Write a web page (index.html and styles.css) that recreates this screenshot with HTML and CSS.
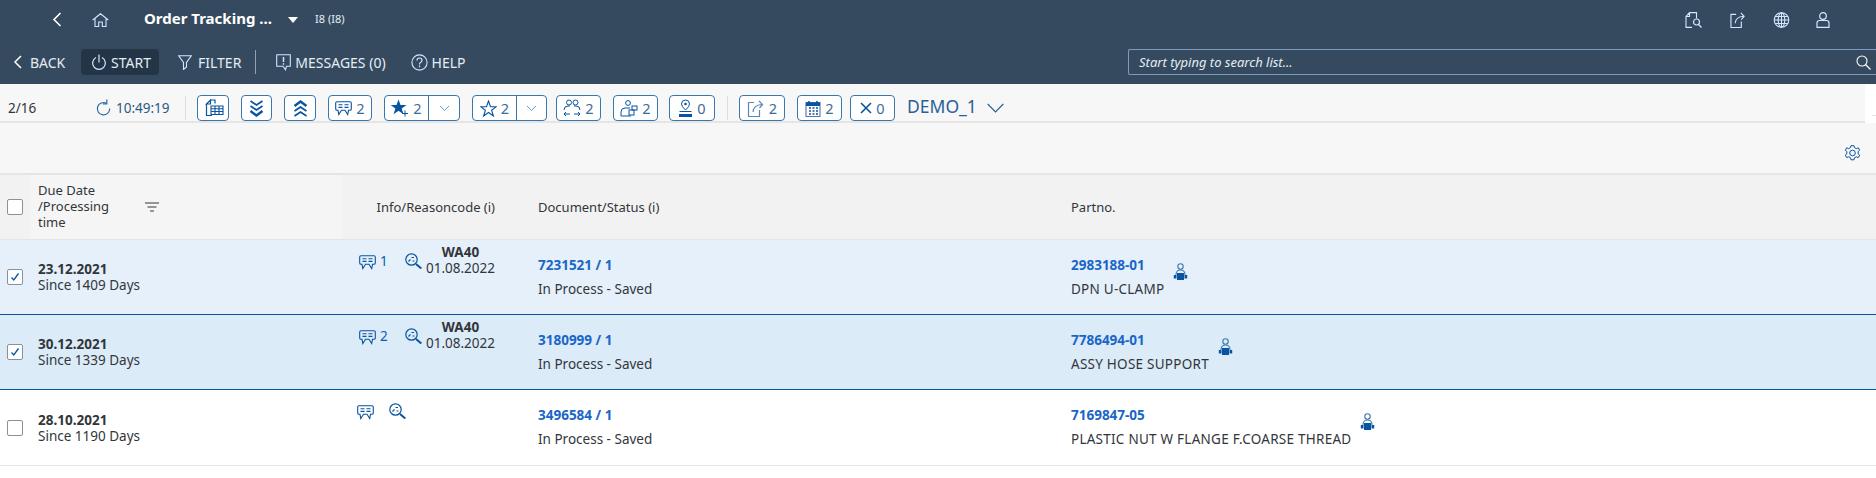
FILE: index.html
```html
<!DOCTYPE html>
<html lang="en">
<head>
    <meta charset="UTF-8">
    <meta name="viewport" content="width=device-width, initial-scale=1.0">
    <title>Order Tracking</title>
    <link rel="stylesheet" href="styles.css">
</head>
<body>

    <svg class="icon-defs" xmlns="http://www.w3.org/2000/svg">
        <symbol id="i-chat" viewBox="0 0 17 15"><path d="M2 .7h13q1.300 0 1.300 1.300v6q0 1.300-1.300 1.300h-1.500l-.8 4.200-2.700-4.200H6.500l-2.700 4.200-.8-4.200H2Q.7 9.300.7 8V2Q.7.7 2 .7z" fill="none" stroke="currentColor" stroke-width="1.100"/><path d="M3.500 3.800h4M9.500 3.800h4M3.500 6.400h4M9.500 6.400h4" stroke="currentColor" stroke-width="1.100"/></symbol>
        <symbol id="i-zoom" viewBox="0 0 17 16"><circle cx="6.500" cy="6.500" r="5.700" fill="none" stroke="currentColor" stroke-width="1.200"/><path d="M11 11l5.300 4.500" stroke="currentColor" stroke-width="2"/><path d="M3.500 8.500l2-2.200M6.500 4.500h2.500M7.500 8h2" stroke="currentColor" stroke-width="1.200"/></symbol>
        <symbol id="i-person" viewBox="0 0 15 18"><circle cx="7.500" cy="3.500" r="2.700" fill="none" stroke="#3a77ad" stroke-width="1.100"/><path d="M3 12q0-5 4.500-5T12 12" fill="none" stroke="#3a77ad" stroke-width="1.100"/><rect x="4" y="10" width="7" height="7" fill="#0854a0"/><path d="M.8 12h2.700v3.500H.8zM11.500 12h2.700v3.500h-2.700z" fill="#0854a0"/></symbol>
        <symbol id="i-share" viewBox="0 0 18 17"><path d="M7 2.500H1.500v14h11V10" fill="none" stroke="currentColor" stroke-width="1.200"/><path d="M6 12q.5-7 9-7.500M12 1l3.500 3.500-3 3.500" fill="none" stroke="currentColor" stroke-width="1.200"/></symbol>
    </svg>

    <header class="shell">
        <div class="shell-top">
            <svg class="nav-back" width="10" height="15" viewBox="0 0 10 15"><path d="M8.500 1L2 7.500 8.500 14" fill="none" stroke="#fff" stroke-width="1.600"/></svg>
            <svg class="nav-home" width="17" height="14" viewBox="0 0 17 14"><path d="M.7 7L8.500.7 16.300 7M3 5.500v8h3.700V9h3.600v4.500H14v-8" fill="none" stroke="#d1e8ff" stroke-width="1.100"/></svg>
            <span class="app-title">Order Tracking ...</span>
            <span class="app-caret"></span>
            <span class="app-system">I8 (I8)</span>
            <div class="shell-icons">
                <svg width="18" height="16" viewBox="0 0 18 16"><path d="M7 .6h4.500v6M7 15.400H1V4.500L4.500.6H7M1 4.500h3.500V.6" fill="none" stroke="#d1e8ff" stroke-width="1.100"/><circle cx="11.500" cy="10" r="3" fill="none" stroke="#d1e8ff" stroke-width="1.200"/><path d="M13.500 12.500l3 3" stroke="#d1e8ff" stroke-width="1.300"/></svg>
                <svg class="ico-light" width="18" height="16"><use href="#i-share"/></svg>
                <svg width="17" height="16" viewBox="0 0 17 16"><g fill="none" stroke="#d1e8ff" stroke-width="1.100"><circle cx="8.500" cy="8" r="7.300"/><ellipse cx="8.500" cy="8" rx="3.300" ry="7.300"/><path d="M8.500.7v14.600M1.200 8h14.600M2 4.500h13M2 11.500h13"/></g></svg>
                <svg width="14" height="16" viewBox="0 0 14 16"><g fill="none" stroke="#d1e8ff" stroke-width="1.200"><circle cx="7" cy="4" r="3.300"/><path d="M1 15.400V11q0-2.500 2.500-2.500h7Q13 8.500 13 11v4.400z"/></g></svg>
            </div>
        </div>
        <div class="shell-actions">
            <a class="act act-back"><svg width="9" height="14" viewBox="0 0 9 14"><path d="M8 1L2 7l6 6" fill="none" stroke="#fff" stroke-width="1.500"/></svg>BACK</a>
            <a class="act act-start"><svg width="14" height="16" viewBox="0 0 14 16"><path d="M4 3.500a6.300 6.300 0 1 0 6 0M7 .5v8" fill="none" stroke="#d1e8ff" stroke-width="1.200"/></svg>START</a>
            <a class="act act-filter"><svg width="14" height="15" viewBox="0 0 14 15"><path d="M.7.7h12.600L8.500 7.500v4.500l-3 2.500V7.500z" fill="none" stroke="#d1e8ff" stroke-width="1.100"/></svg>FILTER</a>
            <span class="act-divider"></span>
            <a class="act act-msg"><svg width="17" height="17" viewBox="0 0 17 17"><path d="M2 .7h13.300v11.600H11.500l-1 3.500-2.500-3.500H1.700V1z" fill="none" stroke="#d1e8ff" stroke-width="1.100"/><path d="M8.500 3v5M8.500 9.300v1.500" stroke="#d1e8ff" stroke-width="1.500"/></svg>MESSAGES (0)</a>
            <a class="act act-help"><svg width="17" height="17" viewBox="0 0 17 17"><circle cx="8.500" cy="8.500" r="7.600" fill="none" stroke="#d1e8ff" stroke-width="1.100"/><path d="M6 6.500q0-2.500 2.500-2.500T11 6.300q0 1.400-1.500 2.200-1 .6-1 2M8.500 11.500v1.700" fill="none" stroke="#d1e8ff" stroke-width="1.200"/></svg>HELP</a>
            <div class="search">
                <span>Start typing to search list...</span>
                <svg width="15" height="15" viewBox="0 0 15 15"><circle cx="6" cy="6" r="5" fill="none" stroke="#fff" stroke-width="1.100"/><path d="M9.500 9.500l5 5" stroke="#fff" stroke-width="1.300"/></svg>
            </div>
        </div>
    </header>

    <section class="toolbar">
        <span class="counter">2/16</span>
        <svg class="refresh" width="15" height="17" viewBox="0 0 15 17"><path d="M10.500 4.300A6.200 6.200 0 1 0 13.700 9.500" fill="none" stroke="#2b6aa6" stroke-width="1.200"/><path d="M10.800 .5v4.300H6.800" fill="none" stroke="#2b6aa6" stroke-width="1.200"/></svg>
        <span class="clock">10:49:19</span>
        <span class="tb-sep"></span>

        <button class="tbtn w-square"><svg width="22" height="18" viewBox="0 0 22 18"><path d="M8.500 1H13v3.500M4.500 5v11.500H10M4.500 5l4-4v4z" fill="none" stroke="#0854a0" stroke-width="1.200"/><path d="M9 7h12v8.500H9z" fill="#fff" stroke="#0854a0" stroke-width="1.100"/><path d="M9 9.700h12M9 12.500h12M13 7v8.500M17 7v8.500" stroke="#0854a0" stroke-width="1.100"/></svg></button>
        <button class="tbtn w-square narrow"><svg width="15" height="17" viewBox="0 0 15 17"><path d="M1.500 1l6 4 6-4M1.500 6l6 4 6-4" fill="none" stroke="#0854a0" stroke-width="1.700"/><path d="M1.500 11l6 4.500 6-4.500" fill="none" stroke="#0854a0" stroke-width="2.400"/></svg></button>
        <button class="tbtn w-square"><svg width="15" height="17" viewBox="0 0 15 17"><path d="M1.500 6L7.500 1.500l6 4.500" fill="none" stroke="#0854a0" stroke-width="2.400"/><path d="M1.500 11l6-4 6 4M1.500 16l6-4 6 4" fill="none" stroke="#0854a0" stroke-width="1.700"/></svg></button>
        <button class="tbtn w-chat"><svg class="ico-blue" width="17" height="15"><use href="#i-chat"/></svg>2</button>
        <div class="tsplit">
            <button class="tbtn-main"><svg width="18" height="18" viewBox="0 0 18 18"><path d="M7.500.5l2 5.500h6l-4.800 3.600 1.800 5.600-5-3.400-5 3.400 1.900-5.600L-.2 6h5.700z" fill="#0854a0"/><path d="M14 11.500v6M11 14.500h6" stroke="#0854a0" stroke-width="1"/></svg>2</button>
            <button class="tbtn-more"><svg width="11" height="7" viewBox="0 0 11 7"><path d="M1 1l4.500 4.500L10 1" fill="none" stroke="#6a9bc3" stroke-width="1"/></svg></button>
        </div>
        <div class="tsplit second">
            <button class="tbtn-main"><svg width="17" height="17" viewBox="0 0 17 17"><path d="M8.500 1l2 5.700h5.800l-4.700 3.500 1.800 5.800-4.900-3.500L3.600 16l1.800-5.800L.7 6.700h5.800z" fill="none" stroke="#0854a0" stroke-width="1.100"/></svg>2</button>
            <button class="tbtn-more"><svg width="11" height="7" viewBox="0 0 11 7"><path d="M1 1l4.500 4.500L10 1" fill="none" stroke="#6a9bc3" stroke-width="1"/></svg></button>
        </div>
        <button class="tbtn w-count"><svg width="18" height="18" viewBox="0 0 18 18"><g fill="none" stroke="#0854a0" stroke-width="1"><circle cx="6" cy="3.500" r="2.500"/><circle cx="12.500" cy="3.500" r="2.500"/><path d="M1 11q0-4 4-4h2M11 7h2q4 0 4 4"/><path d="M1 15h6M3 13l-2 2 2 2M11 15h6M15 13l2 2-2 2"/></g></svg>2</button>
        <button class="tbtn w-count tight"><svg width="18" height="17" viewBox="0 0 18 17"><g fill="none" stroke="#0854a0" stroke-width="1"><circle cx="8" cy="3" r="2.400"/><path d="M1 16v-4q0-4 4-4h5"/><path d="M1 16h10"/><rect x="12" y="6" width="5" height="4"/><rect x="9" y="10" width="5" height="5"/></g></svg>2</button>
        <button class="tbtn w-count wide"><svg width="15" height="18" viewBox="0 0 15 18"><path d="M7.500 1a4 4 0 0 0-4 4q0 2.500 4 6 4-3.500 4-6a4 4 0 0 0-4-4z" fill="none" stroke="#0854a0" stroke-width="1"/><circle cx="7.500" cy="5" r="1.300" fill="#0854a0"/><path d="M1.500 12.500h12" stroke="#0854a0" stroke-width="1"/><rect x="1" y="15" width="13" height="3" fill="#0854a0"/></svg>0</button>
        <span class="tb-sep group"></span>
        <button class="tbtn w-count wide"><svg class="ico-soft" width="18" height="17"><use href="#i-share"/></svg>2</button>
        <button class="tbtn w-count cal"><svg width="16" height="17" viewBox="0 0 16 17"><path d="M1 2.500h14v14H1z" fill="none" stroke="#5b6fa8" stroke-width="1.100"/><path d="M1 2.500h14V6H1z" fill="#0854a0"/><path d="M4 1v3M12 1v3" stroke="#0854a0" stroke-width="1.500"/><path d="M4 8h2M7.500 8h2M11 8h2M4 11h2M7.500 11h2M11 11h2M4 14h2M7.500 14h2M11 14h2" stroke="#0854a0" stroke-width="1.400"/></svg>2</button>
        <button class="tbtn w-count"><svg width="12" height="12" viewBox="0 0 12 12"><path d="M1 1l10 10M11 1L1 11" stroke="#0854a0" stroke-width="1.600"/></svg>0</button>
        <span class="variant">DEMO_1</span>
        <svg class="variant-arrow" width="17" height="10" viewBox="0 0 17 10"><path d="M.7 1l7.800 7.800L16.300 1" fill="none" stroke="#2a6096" stroke-width="1.200"/></svg>
    </section>
    <span class="stub-line"></span>

    <section class="settings-bar">
        <svg width="17" height="16" viewBox="0 0 17 16"><g fill="none" stroke="#0854a0" stroke-width="1"><circle cx="8.500" cy="8" r="2.800"/><path d="M7 .7h3l.5 2 1.900.9 1.900-.8 1.400 2.400-1.500 1.300v2.400l1.500 1.200-1.400 2.500-1.900-.8-1.900.9-.5 2.100H7l-.5-2.100-1.900-.9-1.900.8-1.400-2.500 1.500-1.200V6.500L1.300 5.200l1.400-2.400 1.900.8 1.900-.9z"/></g></svg>
    </section>

    <section class="table">
        <div class="row row-head">
            <div class="cell cell-check"><span class="check"></span></div>
            <div class="cell head-due">
                <span class="head-due-text">Due Date /Processing time</span>
                <svg width="14" height="10" viewBox="0 0 14 10"><path d="M0 1h14M2.500 5h9M5 9h4" stroke="#32363a" stroke-width="1.200"/></svg>
            </div>
            <div class="cell head-info">Info/Reasoncode (i)</div>
            <div class="cell head-plain">Document/Status (i)</div>
            <div class="cell head-plain">Partno.</div>
        </div>

        <div class="row row-sel">
            <div class="cell cell-check"><span class="check checked"><svg width="10" height="10" viewBox="0 0 10 10"><path d="M1.500 5.500l2.300 2.500L8.500 1.500" fill="none" stroke="#0854a0" stroke-width="1.300"/></svg></span></div>
            <div class="cell cell-stack"><b>23.12.2021</b><span>Since 1409 Days</span></div>
            <div class="cell cell-info">
                <svg class="ico-chat" width="17" height="15"><use href="#i-chat"/></svg><span class="info-count">1</span>
                <svg class="ico-zoom" width="17" height="16"><use href="#i-zoom"/></svg>
                <div class="reason"><b>WA40</b><span>01.08.2022</span></div>
            </div>
            <div class="cell cell-two"><a>7231521 / 1</a><span>In Process - Saved</span></div>
            <div class="cell cell-part">
                <div class="cell-two"><a>2983188-01</a><span class="part-desc">DPN U-CLAMP</span></div>
                <svg class="ico-person" width="15" height="18"><use href="#i-person"/></svg>
            </div>
        </div>

        <div class="row row-sel2">
            <div class="cell cell-check"><span class="check checked"><svg width="10" height="10" viewBox="0 0 10 10"><path d="M1.500 5.500l2.300 2.500L8.500 1.500" fill="none" stroke="#0854a0" stroke-width="1.300"/></svg></span></div>
            <div class="cell cell-stack"><b>30.12.2021</b><span>Since 1339 Days</span></div>
            <div class="cell cell-info">
                <svg class="ico-chat" width="17" height="15"><use href="#i-chat"/></svg><span class="info-count">2</span>
                <svg class="ico-zoom" width="17" height="16"><use href="#i-zoom"/></svg>
                <div class="reason"><b>WA40</b><span>01.08.2022</span></div>
            </div>
            <div class="cell cell-two"><a>3180999 / 1</a><span>In Process - Saved</span></div>
            <div class="cell cell-part">
                <div class="cell-two"><a>7786494-01</a><span class="part-desc">ASSY HOSE SUPPORT</span></div>
                <svg class="ico-person" width="15" height="18"><use href="#i-person"/></svg>
            </div>
        </div>

        <div class="row row-plain">
            <div class="cell cell-check"><span class="check"></span></div>
            <div class="cell cell-stack"><b>28.10.2021</b><span>Since 1190 Days</span></div>
            <div class="cell cell-info empty">
                <svg class="ico-chat" width="17" height="15"><use href="#i-chat"/></svg>
                <svg class="ico-zoom" width="17" height="16"><use href="#i-zoom"/></svg>
            </div>
            <div class="cell cell-two"><a>3496584 / 1</a><span>In Process - Saved</span></div>
            <div class="cell cell-part">
                <div class="cell-two"><a>7169847-05</a><span class="part-desc">PLASTIC NUT W FLANGE F.COARSE THREAD</span></div>
                <svg class="ico-person" width="15" height="18"><use href="#i-person"/></svg>
            </div>
        </div>
    </section>

</body>
</html>
```

FILE: styles.css
```css
* {
    box-sizing: border-box;
}
html, body {
    height: 100%;
}
body {
    margin: 0;
    overflow: hidden;
    background-color: #fff;
    color: #32363a;
    font-family: "Noto Sans", "Liberation Sans", Arial, sans-serif;
    font-size: 13.5px;
    position: relative;
}
a {
    color: inherit;
}
svg {
    display: block;
    flex: none;
}
.icon-defs {
    display: none;
}

/* dark header */
.shell {
    height: 84px;
    background-color: #354a5f;
    color: #fff;
}
.shell-top {
    height: 36px;
    padding: 3px 46px 0 52px;
    display: flex;
    align-items: center;
}
.nav-home {
    margin-left: 30px;
}
.app-title {
    margin: 0 0 3px 35px;
    font-size: 15px;
    font-weight: bold;
    width: 144px;
    white-space: nowrap;
}
.app-caret {
    width: 0;
    height: 0;
    border-left: 5px solid transparent;
    border-right: 5px solid transparent;
    border-top: 6px solid #fff;
}
.app-system {
    margin: 0 0 2px 17px;
    font-size: 11px;
    color: #e4edf5;
}
.shell-icons {
    margin-left: auto;
    display: flex;
    align-items: center;
    gap: 26px;
    color: #d1e8ff;
}
.shell-actions {
    height: 48px;
    padding: 13px 0 9px 13px;
    display: flex;
    align-items: center;
    font-size: 14px;
    color: #e4edf5;
}
.act {
    height: 26px;
    display: flex;
    align-items: center;
    white-space: nowrap;
}
.act-back {
    gap: 8px;
    width: 68px;
}
.act-start {
    gap: 5px;
    width: 78px;
    padding-left: 11px;
    background-color: #233547;
    border-radius: 4px;
}
.act-filter {
    margin-left: 19px;
    gap: 6px;
}
.act-divider {
    width: 1px;
    height: 24px;
    margin: 0 19px 0 14px;
    background-color: #8fa3b5;
}
.act-msg {
    gap: 3px;
}
.act-help {
    margin-left: 25px;
    gap: 4px;
}
.search {
    margin-left: auto;
    width: 748px;
    height: 26px;
    padding: 0 5px 0 10px;
    border: 1px solid #7c9cbf;
    border-right: none;
    border-radius: 2px 0 0 2px;
    display: flex;
    align-items: center;
    justify-content: space-between;
    font-size: 13px;
    font-style: italic;
    color: #e4edf5;
}

/* button toolbar */
.toolbar {
    height: 39px;
    margin-right: 11px;
    padding: 11px 0 1px 8px;
    background-color: #f7f7f7;
    border-bottom: 2px solid #e5e5e5;
    display: flex;
    align-items: flex-start;
}
.counter {
    line-height: 26px;
    width: 88px;
}
.refresh {
    margin-top: 4px;
}
.clock {
    margin-left: 5px;
    line-height: 26px;
    color: #2b5a85;
    width: 54px;
}
.tb-sep {
    width: 1px;
    height: 24px;
    margin: 1px 11px 0 15px;
    background-color: #dcdcdc;
}
.tb-sep.group {
    margin: 1px 11px 0 0;
}
.tbtn, .tsplit {
    height: 26px;
    border: 1.5px solid #3a77ad;
    border-radius: 4px;
    background-color: #fff;
    color: #3b6d99;
    font-family: inherit;
    font-size: 14.5px;
}
.tbtn {
    margin-right: 12px;
    padding: 0;
    display: flex;
    align-items: center;
    justify-content: center;
    gap: 4px;
}
.w-square {
    width: 32px;
}
.w-square.narrow {
    width: 31px;
}
.w-chat {
    width: 44px;
}
.tsplit {
    width: 76px;
    margin-right: 12px;
    display: flex;
}
.tsplit.second {
    width: 75px;
    margin-right: 9px;
}
.tbtn-main, .tbtn-more {
    height: 100%;
    padding: 0;
    border: none;
    background: none;
    color: inherit;
    font: inherit;
    display: flex;
    align-items: center;
    justify-content: center;
    gap: 4px;
}
.tbtn-main {
    width: 44px;
    border-right: 1.5px solid #3a77ad;
}
.tbtn-more {
    flex: 1;
}
.w-count {
    width: 45px;
}
.w-count.wide {
    width: 46px;
}
.tbtn.tight {
    margin-right: 11px;
}
.tbtn.cal {
    margin-right: 8px;
}
.ico-soft {
    color: #5d88ad;
}
.ico-blue {
    color: #0854a0;
}
.ico-light {
    color: #d1e8ff;
}
.variant {
    font-size: 17.5px;
    line-height: 23px;
    color: #2a6096;
}
.variant-arrow {
    margin: 8px 0 0 10px;
}
.stub-line {
    position: absolute;
    top: 115px;
    right: 0;
    width: 4px;
    height: 1px;
    background-color: #e5e5e5;
}

/* bar with the settings wheel */
.settings-bar {
    height: 52px;
    padding: 22px 15px 0 0;
    background-color: #f7f7f7;
    border-bottom: 2px solid #e5e5e5;
    display: flex;
    justify-content: flex-end;
}

/* table */
.row {
    display: grid;
    grid-template-columns: 30px 312px 188px 533px 1fr;
    height: 75px;
    border-bottom: 1px solid #0854a0;
}
.row-head {
    height: 65px;
    font-size: 13px;
    background-color: #f2f2f2;
    border-bottom: 1px solid #e5e5e5;
}
.row-sel {
    background-color: #e5f0fa;
}
.row-sel2 {
    background-color: #dcebf8;
}
.row-plain {
    height: 76px;
    background-color: #fff;
    border-bottom: 1px solid #e5e5e5;
}
.cell {
    min-width: 0;
}
.cell-check {
    display: flex;
    align-items: center;
    padding-left: 7px;
}
.check {
    width: 16px;
    height: 16px;
    background-color: #fff;
    border: 1px solid #89919a;
    border-radius: 2px;
    display: flex;
    align-items: center;
    justify-content: center;
}
.head-due {
    background-color: #f5f5f5;
    padding-left: 8px;
    display: flex;
    align-items: center;
}
.head-due-text {
    width: 88px;
    line-height: 15.7px;
    margin-right: 19px;
}
.head-info {
    padding-right: 35px;
    display: flex;
    align-items: center;
    justify-content: flex-end;
    white-space: nowrap;
}
.head-plain {
    padding-left: 8px;
    display: flex;
    align-items: center;
}
.cell-stack {
    padding-left: 8px;
    display: flex;
    flex-direction: column;
    justify-content: center;
    line-height: 16px;
}
.cell-stack b, .reason b {
    font-weight: bold;
}
.cell-info {
    padding: 4px 35px 0 17px;
    display: flex;
    align-items: flex-start;
    color: #0854a0;
}
.cell-info.empty {
    padding-left: 15px;
    gap: 15px;
}
.ico-chat {
    margin-top: 11px;
}
.ico-zoom {
    margin-top: 9px;
    margin-left: 17px;
}
.empty .ico-zoom {
    margin-left: 0;
}
.info-count {
    margin: 9px 0 0 4px;
    line-height: 16px;
    color: #0a5fb4;
}
.reason {
    margin-left: auto;
    display: flex;
    flex-direction: column;
    align-items: center;
    line-height: 16px;
    color: #32363a;
}
.cell-two {
    padding-left: 8px;
    display: flex;
    flex-direction: column;
    justify-content: flex-start;
    padding-top: 17px;
    gap: 8px;
    line-height: 16px;
    white-space: nowrap;
}
.cell-two a {
    color: #1a66c8;
    font-weight: bold;
}
.part-desc {
    letter-spacing: .25px;
}
.cell-part {
    display: flex;
    align-items: flex-start;
}
.ico-person {
    margin: 23px 0 0 9px;
}
```
